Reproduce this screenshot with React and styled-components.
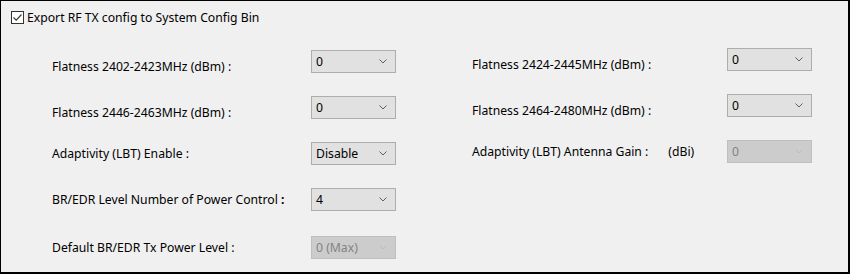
import React from "react";
import styled, { createGlobalStyle } from "styled-components";

const GlobalStyle = createGlobalStyle`
  html, body {
    margin: 0;
    padding: 0;
    background: #f0f0f0;
  }
`;

const leftRows = [
  { label: "Flatness 2402-2423MHz (dBm) :", value: "0", low: true },
  { label: "Flatness 2446-2463MHz (dBm) :", value: "0", low: true },
  { label: "Adaptivity (LBT) Enable :", value: "Disable" },
  { label: "BR/EDR Level Number of Power Control :", value: "4", bold: true },
  { label: "Default BR/EDR Tx Power Level :", value: "0 (Max)", disabled: true, extra: true },
];

const rightRows = [
  { label: "Flatness 2424-2445MHz (dBm) :", value: "0", low: true },
  { label: "Flatness 2464-2480MHz (dBm) :", value: "0", low: true },
  { label: "Adaptivity (LBT) Antenna Gain :", unit: "(dBi)", value: "0", disabled: true },
];

const Chevron = ({ disabled }) => (
  <svg width="8" height="5" viewBox="0 0 8 5">
    <path
      d="M0.5 0.5 L4 4 L7.5 0.5"
      fill="none"
      stroke={disabled ? "#bcbcbc" : "#606060"}
      strokeWidth="1"
    />
  </svg>
);

const Dropdown = ({ value, disabled }) => (
  <Select disabled={disabled}>
    <span>{value}</span>
    <Chevron disabled={disabled} />
  </Select>
);

const Column = ({ rows, labelWidth }) => (
  <ColumnBox>
    {rows.map((r, i) => (
      <Row key={i} $extra={r.extra}>
        <Label $width={labelWidth} $low={r.low}>
          {r.bold ? (
            <>
              {r.label.slice(0, -1)}
              <b>:</b>
            </>
          ) : (
            r.label
          )}
          {r.unit && <Unit>{r.unit}</Unit>}
        </Label>
        <Dropdown value={r.value} disabled={r.disabled} />
      </Row>
    ))}
  </ColumnBox>
);

const App = () => {
  return (
    <>
      <GlobalStyle />
      <Frame>
        <Header>
          <CheckBox>
            <svg width="11" height="11" viewBox="0 0 11 11">
              <path d="M1.5 5.5 L4.2 8.2 L9.5 2.5" fill="none" stroke="#3a3a3a" strokeWidth="1.2" />
            </svg>
          </CheckBox>
          <HeaderText>Export RF TX config to System Config Bin</HeaderText>
        </Header>
        <Body>
          <Left>
            <Column rows={leftRows} labelWidth={259} />
          </Left>
          <Right>
            <Column rows={rightRows} labelWidth={255} />
          </Right>
        </Body>
      </Frame>
    </>
  );
};

export default App;

const Frame = styled.div`
  width: 850px;
  height: 274px;
  box-sizing: border-box;
  border-top: 1px solid #000;
  border-left: 1px solid #000;
  border-right: 2px solid #000;
  border-bottom: 2px solid #000;
  background: #f0f0f0;
  font-family: "Noto Sans", "Open Sans", sans-serif;
  font-size: 12.2px;
  color: #000;
`;

const Header = styled.div`
  display: flex;
  align-items: center;
  height: 13px;
  padding: 10px 0 0 10px;
`;

const CheckBox = styled.div`
  width: 13px;
  height: 13px;
  box-sizing: border-box;
  border: 1px solid #333;
  background: #fff;
  display: flex;
  align-items: center;
  justify-content: center;
`;

const HeaderText = styled.span`
  margin-left: 3px;
  white-space: nowrap;
`;

const Body = styled.div`
  display: flex;
`;

const Left = styled.div`
  margin-left: 51px;
  margin-top: 26px;
`;

const Right = styled.div`
  margin-left: 76px;
  margin-top: 24px;
`;

const ColumnBox = styled.div`
  display: flex;
  flex-direction: column;
  gap: 23px;
`;

const Row = styled.div`
  display: flex;
  align-items: center;
  height: 23px;
  margin-top: ${(p) => (p.$extra ? "2px" : "0")};
`;

const Label = styled.div`
  width: ${(p) => p.$width}px;
  flex-shrink: 0;
  white-space: nowrap;
  position: relative;
  top: ${(p) => (p.$low ? "5px" : "0")};
  b {
    font-weight: 700;
  }
`;

const Unit = styled.span`
  margin-left: 20px;
`;

const Select = styled.div`
  width: 85px;
  height: 23px;
  box-sizing: border-box;
  display: flex;
  align-items: center;
  justify-content: space-between;
  padding: 0 8px 0 4px;
  background: ${(p) => (p.disabled ? "#cccccc" : "#e1e1e1")};
  border: 1px solid ${(p) => (p.disabled ? "#bfbfbf" : "#adadad")};
  color: ${(p) => (p.disabled ? "#838383" : "#000")};
`;
